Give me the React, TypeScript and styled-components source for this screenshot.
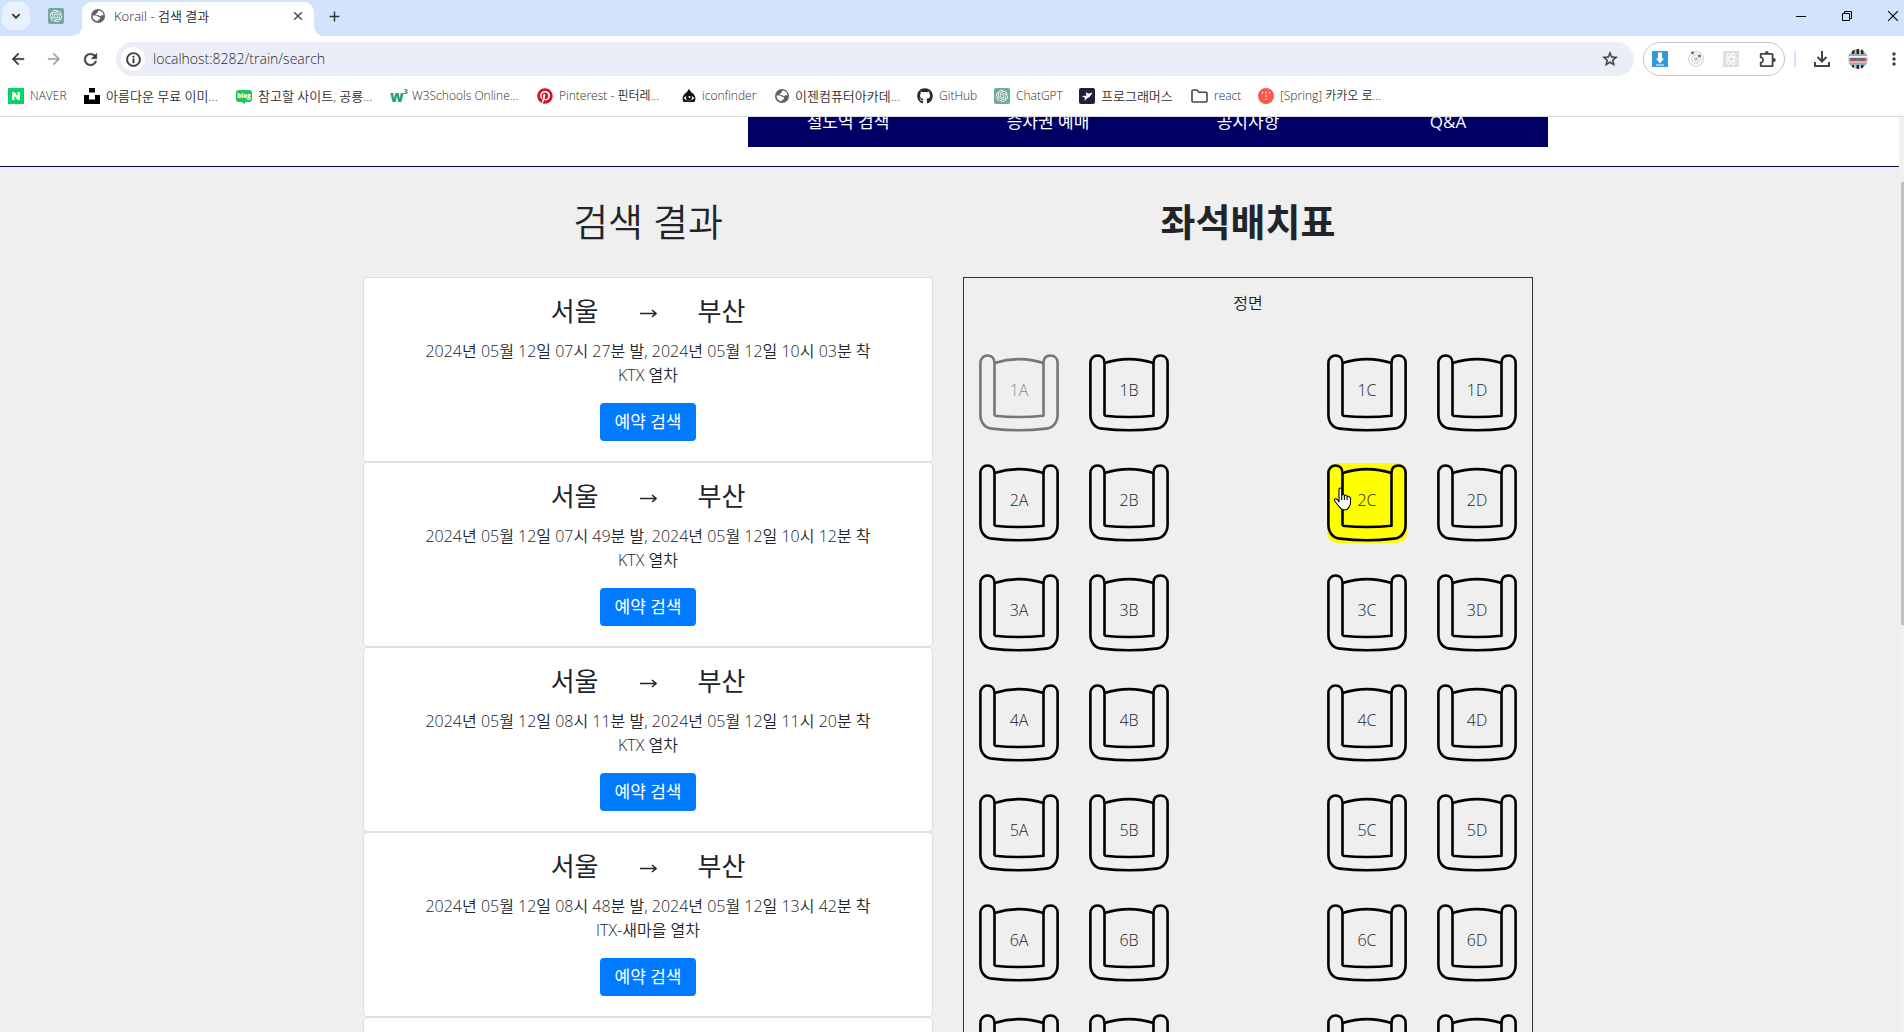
import React from "react";
import styled, { createGlobalStyle } from "styled-components";
import { FaGithub, FaPinterest } from "react-icons/fa";
import { SiOpenai, SiUnsplash, SiNaver } from "react-icons/si";
import {
  MdArrowBack,
  MdArrowForward,
  MdRefresh,
  MdInfoOutline,
  MdStarBorder,
  MdKeyboardArrowDown,
  MdClose,
  MdAdd,
  MdMoreVert,
} from "react-icons/md";

const GlobalStyle = createGlobalStyle`
  * { box-sizing: border-box; }
  body {
    margin: 0;
    overflow: hidden;
    font-family: "Open Sans", "Noto Sans CJK KR", sans-serif;
    font-size: 16px;
    font-weight: 350;
    line-height: 24px;
    color: #212529;
    background: #fff;
  }
  button, input { font-family: inherit; font-weight: inherit; color: inherit; }
  button { border: 0; padding: 0; background: none; cursor: pointer; }
  svg { display: block; flex: none; }
  path[fill="none"] { stroke: none; }
`;

/* ---------- browser window ---------- */

const Window = styled.div`
  display: flex;
  flex-direction: column;
  height: 100vh;
`;

const TabStrip = styled.div`
  display: flex;
  flex: none;
  height: 36px;
  padding-left: 2px;
  background: #d3e3fd;
`;

const TabSearch = styled.button`
  display: grid;
  place-items: center;
  width: 28px;
  height: 28px;
  margin-top: 2px;
  border-radius: 10px;
  background: #e9f1fe;
  color: #1f1f1f;
`;

const PinnedTab = styled.button`
  display: grid;
  place-items: center;
  width: 52px;
  height: 32px;
`;

const GptBadge = styled.span`
  display: grid;
  place-items: center;
  flex: none;
  width: 16px;
  height: 16px;
  border-radius: 2px;
  background: #75a99c;
  color: #fff;
`;

const ActiveTab = styled.div`
  position: relative;
  display: flex;
  align-items: center;
  gap: 9px;
  width: 232px;
  height: 34px;
  margin-top: 2px;
  padding: 0 9px 6px 9px;
  border-radius: 10px 10px 0 0;
  background: #fff;
  font-size: 13px;
  line-height: 18px;

  &::before,
  &::after {
    content: "";
    position: absolute;
    bottom: 0;
    width: 10px;
    height: 10px;
  }
  &::before {
    left: -10px;
    background: radial-gradient(circle at 0 0, transparent 10px, #fff 10px);
  }
  &::after {
    right: -10px;
    background: radial-gradient(circle at 100% 0, transparent 10px, #fff 10px);
  }
`;

const TabTitle = styled.span`
  flex: 1;
`;

const NewTab = styled.button`
  display: grid;
  place-items: center;
  width: 40px;
  height: 32px;
  color: #333;
`;

const WindowControls = styled.div`
  display: flex;
  height: 32px;
  margin-left: auto;
`;

const WindowButton = styled.button<{ $last?: boolean }>`
  display: grid;
  place-items: center;
  width: ${(p) => (p.$last ? "34px" : "46px")};
  padding-left: ${(p) => (p.$last ? "12px" : "0")};
`;

const Toolbar = styled.div`
  display: flex;
  align-items: center;
  flex: none;
  height: 46px;
`;

const ToolButton = styled.button<{ $dim?: boolean }>`
  display: grid;
  place-items: center;
  flex: none;
  width: 36px;
  height: 34px;
  color: ${(p) => (p.$dim ? "#a6a6a6" : "#3c3c3c")};
`;

const MenuButton = styled(ToolButton)`
  width: 28px;
  padding-left: 8px;
`;

const Omnibox = styled.div`
  display: flex;
  align-items: center;
  flex: 1;
  height: 34px;
  margin: 0 9px 0 8px;
  padding: 0 15px 0 5px;
  border-radius: 17px;
  background: #ebedf7;
`;

const SiteInfo = styled.button`
  display: grid;
  place-items: center;
  width: 24px;
  height: 24px;
  border-radius: 50%;
  background: #fff;
  color: #333;
`;

const Address = styled.input`
  flex: 1;
  min-width: 0;
  padding: 0 0 0 8px;
  border: 0;
  outline: 0;
  background: none;
  font-size: 14px;
  font-weight: 300;
  line-height: 20px;
  color: #2a2a2f;
`;

const PlainButton = styled.button`
  display: grid;
  place-items: center;
  color: #444;
`;

const Extensions = styled.div`
  display: flex;
  align-items: center;
  justify-content: space-between;
  width: 142px;
  height: 34px;
  padding: 0 8px;
  border: 1px solid #c4c6ca;
  border-radius: 17px;
`;

const Separator = styled.span`
  width: 2px;
  height: 16px;
  margin: 0 8px 0 9px;
  background: #d3e3fd;
`;

const Bookmarks = styled.nav`
  display: flex;
  flex: none;
  height: 35px;
  padding: 1px 0 7px 8px;
  border-bottom: 1px solid #dcdcdc;
`;

const Bookmark = styled.a<{ $width: number; $hangul?: boolean }>`
  display: flex;
  align-items: center;
  gap: 6px;
  flex: none;
  width: ${(p) => p.$width}px;
  color: #2c2c2c;
  font-size: ${(p) => (p.$hangul ? 13 : 12)}px;
  line-height: 16px;
  white-space: nowrap;
  text-decoration: none;
`;

const Tile = styled.span<{ $bg: string; $radius?: number }>`
  display: grid;
  place-items: center;
  flex: none;
  width: 16px;
  height: 16px;
  border-radius: ${(p) => p.$radius ?? 0}px;
  background: ${(p) => p.$bg};
  color: #fff;
`;

const BlogBubble = styled.span`
  position: relative;
  display: grid;
  place-items: center;
  width: 16px;
  height: 12px;
  border-radius: 3px;
  background: #1ec45f;
  color: #fff;
  font-size: 6px;
  font-weight: 800;
  line-height: 8px;

  &::after {
    content: "";
    position: absolute;
    top: 12px;
    left: 6px;
    border: 2px solid transparent;
    border-top-color: #1ec45f;
  }
`;

const W3Mark = styled.span`
  display: flex;
  width: 16px;
  color: #1fa37a;
  font-size: 15px;
  font-weight: 800;
  line-height: 16px;

  sup {
    font-size: 7px;
    line-height: 8px;
  }
`;

/* ---------- page ---------- */

const Viewport = styled.div`
  display: flex;
  flex: 1;
  min-height: 0;
  overflow: hidden;
`;

const Page = styled.div`
  flex: 1;
  min-width: 0;
  overflow: hidden;
  background: #efefef;
`;

const ScrollTrack = styled.div`
  flex: none;
  width: 5px;
  padding: 65px 0 0 2px;
  background: #f1f1f1;
`;

const ScrollThumb = styled.div`
  height: 443px;
  background: #c1c1c1;
`;

const Header = styled.header`
  margin-top: -21px;
  padding: 0 3px 19px 0;
  border-bottom: 1px solid #000044;
  background: #fff;
`;

const Container = styled.div`
  display: flex;
  width: 1200px;
  max-width: 100%;
  margin: 0 auto;
`;

const MainNav = styled.nav`
  display: grid;
  grid-template-columns: repeat(4, 1fr);
  width: 800px;
  margin-left: auto;
  background: #000064;
`;

const NavLink = styled.a`
  display: grid;
  place-items: center;
  height: 51px;
  color: #fff;
  font-size: 17px;
  font-weight: 400;
  text-decoration: none;
`;

const Main = styled.main`
  padding: 30px 3px 0 0;
`;

const Column = styled.section`
  flex: 1;
  padding: 0 15px;
`;

const Heading = styled.h1<{ $bold?: boolean }>`
  margin: 0 0 32px;
  text-align: center;
  font-size: 38px;
  font-weight: ${(p) => (p.$bold ? 700 : 350)};
  line-height: 48px;
`;

const Card = styled.article`
  display: flex;
  flex-direction: column;
  align-items: center;
  padding: 19px 20px 20px;
  border: 1px solid #dfdfdf;
  border-radius: 4px;
  background: #fff;
`;

const Route = styled.h2`
  display: flex;
  gap: 41px;
  margin: 0 0 13px;
  font-size: 26px;
  font-weight: 400;
  line-height: 29px;
`;

const Arrow = styled.span`
  display: grid;
  place-items: center;
  padding-top: 4px;
`;

const Schedule = styled.p`
  margin: 0 0 16px;
  text-align: center;
`;

const ReserveButton = styled.button`
  height: 38px;
  padding: 0 15px;
  border-radius: 4px;
  background: #007bff;
  color: #fff;
  font-size: 17px;
  font-weight: 400;
  line-height: 24px;
`;

const SeatMap = styled.div`
  padding: 13px 15px 30px;
  border: 1px solid #333;
`;

const Front = styled.p`
  margin: 0 0 38px;
  text-align: center;
`;

const SeatRows = styled.div`
  display: grid;
  gap: 30px;
`;

const SeatRow = styled.div`
  display: flex;
  justify-content: space-between;
`;

const SeatPair = styled.div`
  display: flex;
  gap: 30px;
`;

const Seat = styled.button`
  position: relative;
  display: grid;
  place-items: center;
  width: 80px;
  height: 80px;
  border-radius: 10px;
  font-size: 16px;
  line-height: 24px;
  color: #212529;

  > * {
    grid-area: 1 / 1;
  }
  > span {
    padding-bottom: 7px;
  }
  &[aria-pressed="true"] {
    background: #ff0;
  }
  &:disabled {
    opacity: 0.5;
  }
`;

const Pointer = styled.svg`
  position: absolute;
  left: 6px;
  top: 24px;
`;

/* ---------- drawings ---------- */

const Globe = () => (
  <svg width="14" height="14" viewBox="0 0 14 14">
    <circle cx="7" cy="7" r="7" fill="#5f6368" />
    <path
      d="M7.6 1.6c-.9.7-.2 1.4-1.1 1.8-.9.3-.5 1.4-1.5 1.5-.7 0-.6 1 .2 1h1.9c1 .1.8 1.3 1.9 1.3.9 0 .8-.9 1.6-.9h1.8c.1-2.3-1.7-4.6-4.8-4.7zM1.6 6.6c0 3 2 5.5 5.1 5.8V11c1.6-.1 2.3-.8 2.3-1.7 0-1.3-1.2-1.3-2-1.5-1.1-1.6-3.2-1.2-5.4-1.2z"
      fill="#fff"
    />
  </svg>
);

const Chair = () => (
  <svg width="80" height="80" viewBox="0 0 80 80" fill="none" stroke="#000" strokeWidth="2.6" strokeLinejoin="round">
    <path d="M15.5 62.7V10C15.5 5 12.5 2.5 8.5 2.5S1.4 5.5 1.4 10V61.5C1.4 69.5 6 75.2 13 75.6Q40 78.8 67 75.6C74 75.2 78.6 69.5 78.6 61.5V10C78.6 5.5 75.7 2.5 71.5 2.5S64.5 5 64.5 10V62.7Q40 65.3 15.5 62.7" />
    <path d="M15.5 10Q40 2.2 64.5 10" />
  </svg>
);

const Hand = () => (
  <Pointer width="19" height="24" viewBox="0 0 19 24" fill="#fff" stroke="#000" strokeWidth="1.1" strokeLinejoin="round">
    <path d="M6 15V2.5Q6 1 7.3 1T8.7 2.5V8.5Q9 7.3 10.2 7.5T11.4 9Q11.7 8 12.9 8.2T14.1 9.8Q14.5 9 15.6 9.3T17.5 11V15.5Q17.5 18 16 20Q14.5 23 11.5 23T6.5 20L2 14.5Q.8 12.8 2 12T4.5 12.8Z" />
    <path d="M8.7 8.5V13M11.4 9V13M14.1 9.8V13" />
  </Pointer>
);

const RightArrow = () => (
  <svg width="17" height="11" viewBox="0 0 17 11" fill="none" stroke="#212529" strokeWidth="1.6">
    <path d="M0 5.5H16M12 2 16 5.5 12 9" />
  </svg>
);

const W3 = () => (
  <W3Mark>
    w<sup>3</sup>
  </W3Mark>
);

const Eye = () => (
  <svg width="14" height="14" viewBox="0 0 14 14">
    <path d="M7 0 9.5 3.5Q13.5 6 13.5 10L12.5 13H1.5L.5 10Q.5 6 4.5 3.5Z" fill="#111" />
    <path d="M1.5 9Q7 3.5 12.5 9Q7 14 1.5 9Z" fill="#fff" />
    <circle cx="7" cy="8.5" r="3" fill="#111" />
    <circle cx="7.5" cy="8" r="1" fill="#fff" />
  </svg>
);

const Bird = () => (
  <svg width="12" height="12" viewBox="0 0 12 12" fill="#fff">
    <path d="M5 1.5Q5.5 4 8 3.5L11.5 2.5 10 5Q9 7.5 6.5 8L3.5 11 4 8 .8 6 4 5.8 5.8 5.5Q4.5 4 5 1.5Z" />
  </svg>
);

const Folder = () => (
  <svg width="17" height="14" viewBox="0 0 17 14" fill="none" stroke="#454746" strokeWidth="1.6" strokeLinejoin="round">
    <path d="M1 12V2Q1 1 2 1H6L8 3.2H15Q16 3.2 16 4.2V12Q16 13 15 13H2Q1 13 1 12Z" />
  </svg>
);

const TistoryDots = () => (
  <svg width="10" height="10" viewBox="0 0 10 10" fill="#fff">
    <circle cx="1.5" cy="1.8" r=".8" />
    <circle cx="5" cy="1.8" r=".8" />
    <circle cx="8.5" cy="1.8" r=".8" />
    <circle cx="5" cy="5" r=".8" />
    <circle cx="5" cy="8.2" r=".8" />
  </svg>
);

const Puzzle = () => (
  <svg width="17" height="17" viewBox="0 0 17 17" fill="#444" fillRule="evenodd">
    <path d="M2 2H6Q6 0 7.8 0T9.6 2H13Q14.5 2 14.5 3.5V7Q16.8 7 16.8 9T14.5 11V14.5Q14.5 16 13 16H2Q.8 16 .8 14.8V11Q3.3 11 3.3 9T.8 7V3.2Q.8 2 2 2ZM2.6 3.8V5.5Q5 6.5 5 9T2.6 12.5V14.2H12.7V3.8Z" />
  </svg>
);

const Download = () => (
  <svg width="16" height="16" viewBox="0 0 16 16" fill="none" stroke="#444" strokeWidth="2">
    <path d="M8 0V10M3.5 6 8 10.5 12.5 6M1 11V15H15V11" />
  </svg>
);

const BlueDownload = () => (
  <svg width="16" height="16" viewBox="0 0 16 16">
    <path d="M0 0H16V16H0Z" fill="#3498db" />
    <path d="M6 1.5H10V7.5H12L8 12.5 4 7.5H6ZM4 13.5H12V14.5H4Z" fill="#fff" />
  </svg>
);

const Orbit = () => (
  <svg width="16" height="16" viewBox="0 0 16 16" fill="none" stroke="#c9c9c9">
    <circle cx="8" cy="8" r="7.3" />
    <circle cx="8" cy="8" r="4.3" />
    <circle cx="8" cy="8" r="1.8" fill="#c9c9c9" />
    <circle cx="4.5" cy="1.8" r="1.6" fill="#777" stroke="none" />
    <circle cx="11.5" cy="5" r="1.6" fill="#777" stroke="none" />
  </svg>
);

const ReactDim = () => (
  <svg width="16" height="16" viewBox="0 0 16 16" fill="none" stroke="#fff" strokeWidth="1">
    <path d="M0 0H16V16H0Z" fill="#dedede" stroke="none" />
    <ellipse cx="8" cy="8" rx="6" ry="2.4" />
    <ellipse cx="8" cy="8" rx="6" ry="2.4" transform="rotate(60 8 8)" />
    <ellipse cx="8" cy="8" rx="6" ry="2.4" transform="rotate(120 8 8)" />
  </svg>
);

const Avatar = () => (
  <svg width="20" height="20" viewBox="0 0 20 20">
    <clipPath id="avatar-round">
      <circle cx="10" cy="10" r="10" />
    </clipPath>
    <g clipPath="url(#avatar-round)">
      <path d="M0 0H20V20H0Z" fill="#d9b8ae" />
      <path d="M4 0H6.5V5H4ZM8.5 0H11V5H8.5ZM13 0H15.5V5H13ZM4 16H6V20H4ZM8.5 16H11V20H8.5ZM13 16H15.5V20H13Z" fill="#2a2226" />
      <path d="M0 5H20V7H0ZM0 14H20V16H0Z" fill="#7cb6cf" />
      <path d="M0 7H20V8.5H0Z" fill="#f4f4f4" />
      <path d="M2 9H18V12H2Z" fill="#6a7288" />
      <path d="M3 9H8V11.5H3ZM12 9H16V11.5H12Z" fill="#c33f52" />
    </g>
  </svg>
);

const Minimize = () => (
  <svg width="10" height="10" viewBox="0 0 10 10" stroke="#000">
    <path d="M0 5.5H10" />
  </svg>
);
const Restore = () => (
  <svg width="10" height="10" viewBox="0 0 10 10" fill="none" stroke="#000">
    <path d="M.5 2.5H7.5V9.5H.5ZM2.5 2.5V.5H9.5V7.5H7.5" />
  </svg>
);
const CloseWindow = () => (
  <svg width="10" height="10" viewBox="0 0 10 10" stroke="#000" strokeWidth="1.1">
    <path d="M0 0 10 10M10 0 0 10" />
  </svg>
);

/* ---------- data ---------- */

const bookmarks = [
  { label: "NAVER", width: 76, icon: <Tile $bg="#03d561"><SiNaver size={8} /></Tile> },
  { label: "아름다운 무료 이미...", width: 152, hangul: true, icon: <SiUnsplash size={16} color="#000" /> },
  { label: "참고할 사이트, 공룡...", width: 154, hangul: true, icon: <BlogBubble>blog</BlogBubble> },
  { label: "W3Schools Online...", width: 147, icon: <W3 /> },
  { label: "Pinterest - 핀터레...", width: 145, icon: <FaPinterest size={16} color="#d5132c" /> },
  { label: "iconfinder", width: 93, icon: <Eye /> },
  { label: "이젠컴퓨터아카데...", width: 142, hangul: true, icon: <Globe /> },
  { label: "GitHub", width: 77, icon: <FaGithub size={16} color="#24292f" /> },
  { label: "ChatGPT", width: 85, icon: <GptBadge><SiOpenai size={12} /></GptBadge> },
  { label: "프로그래머스", width: 112, hangul: true, icon: <Tile $bg="#1e2235" $radius={2}><Bird /></Tile> },
  { label: "react", width: 67, icon: <Folder /> },
  { label: "[Spring] 카카오 로...", width: 130, icon: <Tile $bg="#f9584b" $radius={8}><TistoryDots /></Tile> },
];

const menu = ["철도역 검색", "승차권 예매", "공지사항", "Q&A"];

const trains = [
  { depart: "07시 27분", arrive: "10시 03분", kind: "KTX" },
  { depart: "07시 49분", arrive: "10시 12분", kind: "KTX" },
  { depart: "08시 11분", arrive: "11시 20분", kind: "KTX" },
  { depart: "08시 48분", arrive: "13시 42분", kind: "ITX-새마을" },
  { depart: "09시 00분", arrive: "11시 42분", kind: "KTX" },
];

const rows = [1, 2, 3, 4, 5, 6, 7];
const pairs = [["A", "B"], ["C", "D"]];
const bolder = { stroke: "currentColor", strokeWidth: 0.6 };

export default function App() {
  const [selected, setSelected] = React.useState("2C");

  return (
    <Window>
      <GlobalStyle />
      <TabStrip>
        <TabSearch aria-label="탭 검색"><MdKeyboardArrowDown size={16} {...bolder} /></TabSearch>
        <PinnedTab aria-label="ChatGPT"><GptBadge><SiOpenai size={12} /></GptBadge></PinnedTab>
        <ActiveTab>
          <Globe />
          <TabTitle>Korail - 검색 결과</TabTitle>
          <PlainButton aria-label="탭 닫기"><MdClose size={14} {...bolder} /></PlainButton>
        </ActiveTab>
        <NewTab aria-label="새 탭"><MdAdd size={17} /></NewTab>
        <WindowControls>
          <WindowButton aria-label="최소화"><Minimize /></WindowButton>
          <WindowButton aria-label="이전 크기로 복원"><Restore /></WindowButton>
          <WindowButton $last aria-label="닫기"><CloseWindow /></WindowButton>
        </WindowControls>
      </TabStrip>
      <Toolbar>
        <ToolButton aria-label="뒤로"><MdArrowBack size={18} {...bolder} /></ToolButton>
        <ToolButton $dim aria-label="앞으로"><MdArrowForward size={18} {...bolder} /></ToolButton>
        <ToolButton aria-label="새로고침"><MdRefresh size={19} {...bolder} /></ToolButton>
        <Omnibox>
          <SiteInfo aria-label="사이트 정보"><MdInfoOutline size={17} {...bolder} /></SiteInfo>
          <Address aria-label="주소" defaultValue="localhost:8282/train/search" />
          <PlainButton aria-label="북마크에 추가"><MdStarBorder size={18} {...bolder} /></PlainButton>
        </Omnibox>
        <Extensions>
          <PlainButton aria-label="다운로더"><BlueDownload /></PlainButton>
          <PlainButton aria-label="궤도"><Orbit /></PlainButton>
          <PlainButton aria-label="React"><ReactDim /></PlainButton>
          <PlainButton aria-label="확장 프로그램"><Puzzle /></PlainButton>
        </Extensions>
        <Separator />
        <ToolButton aria-label="다운로드"><Download /></ToolButton>
        <ToolButton aria-label="프로필"><Avatar /></ToolButton>
        <MenuButton aria-label="메뉴"><MdMoreVert size={20} /></MenuButton>
      </Toolbar>
      <Bookmarks>
        {bookmarks.map((b) => (
          <Bookmark key={b.label} href="#" $width={b.width} $hangul={b.hangul}>
            {b.icon}
            {b.label}
          </Bookmark>
        ))}
      </Bookmarks>
      <Viewport>
        <Page>
          <Header>
            <Container>
              <MainNav>
                {menu.map((m) => (
                  <NavLink key={m} href="#">{m}</NavLink>
                ))}
              </MainNav>
            </Container>
          </Header>
          <Main>
            <Container>
              <Column>
                <Heading>검색 결과</Heading>
                {trains.map((t) => (
                  <Card key={t.depart}>
                    <Route>
                      <span>서울</span>
                      <Arrow><RightArrow /></Arrow>
                      <span>부산</span>
                    </Route>
                    <Schedule>
                      2024년 05월 12일 {t.depart} 발, 2024년 05월 12일 {t.arrive} 착
                      <br />
                      {t.kind} 열차
                    </Schedule>
                    <ReserveButton>예약 검색</ReserveButton>
                  </Card>
                ))}
              </Column>
              <Column>
                <Heading $bold>좌석배치표</Heading>
                <SeatMap>
                  <Front>정면</Front>
                  <SeatRows>
                    {rows.map((r) => (
                      <SeatRow key={r}>
                        {pairs.map((pair) => (
                          <SeatPair key={pair[0]}>
                            {pair.map((letter) => {
                              const id = `${r}${letter}`;
                              return (
                                <Seat
                                  key={id}
                                  disabled={id === "1A"}
                                  aria-pressed={selected === id}
                                  onClick={() => setSelected(id)}
                                >
                                  <Chair />
                                  <span>{id}</span>
                                  {id === "2C" && <Hand />}
                                </Seat>
                              );
                            })}
                          </SeatPair>
                        ))}
                      </SeatRow>
                    ))}
                  </SeatRows>
                </SeatMap>
              </Column>
            </Container>
          </Main>
        </Page>
        <ScrollTrack>
          <ScrollThumb />
        </ScrollTrack>
      </Viewport>
    </Window>
  );
}
